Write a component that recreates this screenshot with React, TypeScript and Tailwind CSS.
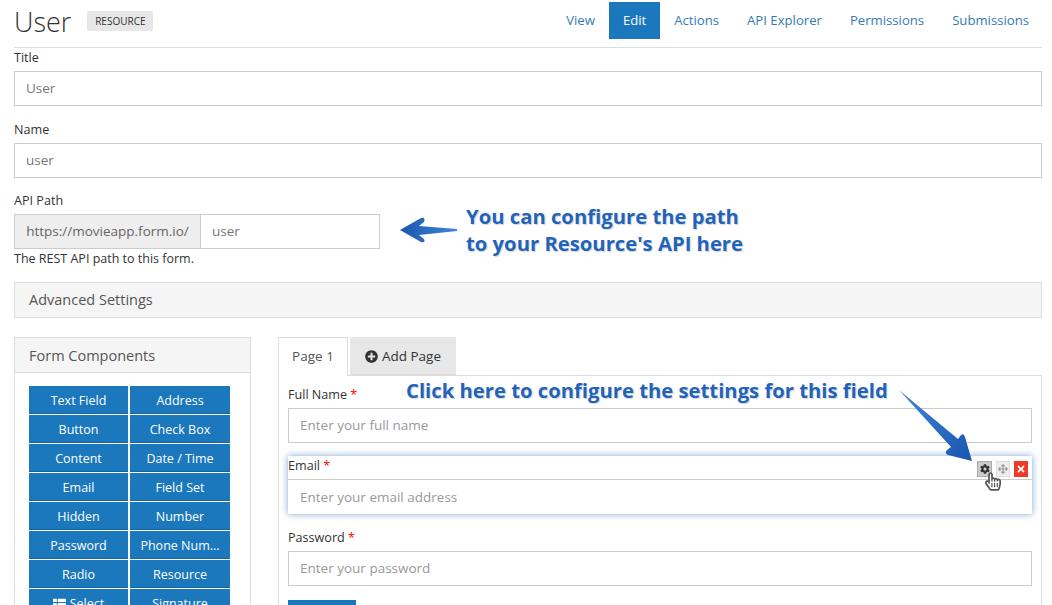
import { FaPlusCircle, FaThList, FaCog, FaArrowsAlt, FaTimes, FaRegHandPointer, FaHandPointer } from "react-icons/fa";

const tabs = ["View", "Edit", "Actions", "API Explorer", "Permissions", "Submissions"];

const components = [
  ["Text Field", "Address"],
  ["Button", "Check Box"],
  ["Content", "Date / Time"],
  ["Email", "Field Set"],
  ["Hidden", "Number"],
  ["Password", "Phone Num..."],
  ["Radio", "Resource"],
  ["Select", "Signature"],
];

const calloutText =
  "absolute font-bold text-[20.25px] leading-[27px] text-[#1f63bb] whitespace-nowrap [text-shadow:0_0_2px_#fff,1px_1px_1px_#c9c9c9,-1px_-1px_1px_#fff]";

function Label({ text, required }: { text: string; required?: boolean }) {
  return (
    <div className="text-[12.6px] leading-[20px] text-[#333]">
      {text}
      {required && <span className="text-[#f00]"> *</span>}
    </div>
  );
}

function Input({ value, placeholder }: { value?: string; placeholder?: string }) {
  return (
    <div className="h-[35px] border border-[#ccc] bg-white px-[11px] flex items-center text-[13.5px] text-[#777]">
      {value ?? <span className="text-[#999]">{placeholder}</span>}
    </div>
  );
}

function FormComponents() {
  return (
    <div className="w-[237px] shrink-0 border border-[#ddd] border-b-0">
      <div className="h-[35px] bg-[#f5f5f5] border-b border-[#ddd] pl-[14px] pt-[1px] flex items-center text-[14.5px] text-[#555]">
        Form Components
      </div>
      <div className="pt-[13px] pl-[14px] grid grid-cols-[99px_100px] gap-x-[2px] gap-y-px">
        {components.flat().map((name) => (
          <div
            key={name}
            className="h-[28px] pt-[3px] bg-[#1b78bc] border-b border-[#16659f] text-white text-[12.5px] flex items-center justify-center gap-1"
          >
            {name === "Select" && <FaThList className="w-[13px] h-[13px]" />}
            {name}
          </div>
        ))}
      </div>
    </div>
  );
}

function Builder() {
  return (
    <div className="flex-1 min-w-0">
      <div className="flex h-[38px] gap-[2px]">
        <div className="w-[70px] h-[39px] pb-[2px] relative z-10 bg-white border border-[#ddd] border-b-0 flex items-center justify-center text-[13.5px] text-[#555]">
          Page 1
        </div>
        <div className="w-[106px] pt-[1px] bg-[#e7e7e7] border-b border-[#ddd] flex items-center justify-center gap-1 text-[13.5px] text-[#333]">
          <FaPlusCircle className="w-[13px] h-[13px]" />
          Add Page
        </div>
      </div>
      <div className="border border-[#ddd] border-b-0 h-[230px] px-[9px] pt-[9px]">
        <Label text="Full Name" required />
        <div className="mt-[3px]">
          <Input placeholder="Enter your full name" />
        </div>
        <div className="relative mt-[13px] h-[58px] bg-white shadow-[0_0_7px_rgba(70,130,190,0.7)]">
          <div className="h-[24px] pb-[2px] flex items-center border-b border-[#ccc] text-[12.6px] text-[#333]">
            Email<span className="text-[#f00]">&nbsp;*</span>
          </div>
          <div className="h-[34px] px-[12px] flex items-center text-[13.5px] text-[#999]">
            Enter your email address
          </div>
          <div className="absolute top-[5px] right-[4px] flex gap-[4px]">
            <div className="w-[15px] h-[16px] bg-[#ccc] border border-[#aaa] flex items-center justify-center text-[#333]">
              <FaCog className="w-[10px] h-[10px]" />
            </div>
            <div className="w-[14px] h-[16px] bg-[#eee] border border-[#ddd] flex items-center justify-center text-[#999]">
              <FaArrowsAlt className="w-[10px] h-[10px]" />
            </div>
            <div className="w-[14px] h-[16px] bg-[#ee3a2b] flex items-center justify-center text-white">
              <FaTimes className="w-[10px] h-[10px]" />
            </div>
          </div>
        </div>
        <div className="mt-[14px]">
          <Label text="Password" required />
        </div>
        <div className="mt-[3px]">
          <Input placeholder="Enter your password" />
        </div>
        <div className="mt-[14px] w-[68px] h-[30px] bg-[#1b78bc]" />
      </div>
    </div>
  );
}

export default function App() {
  return (
    <div
      className="relative h-[605px] w-[1052px] overflow-hidden bg-white pl-[14px] pr-[10px]"
      style={{ fontFamily: '"Open Sans", sans-serif' }}
    >
      {/* Header */}
      <div className="h-[48px] border-b border-[#ddd] flex">
        <div className="flex items-center h-[42px]">
          <h1 className="text-[27px] font-light text-[#333] leading-none">User</h1>
          <span className="ml-[16px] h-[20px] w-[66px] justify-center rounded-[2px] bg-[#e7e7e7] flex items-center text-[10px] text-[#333]">
            RESOURCE
          </span>
        </div>
        <div className="ml-auto flex h-[37px] mt-[2px] mr-[-1px] text-[13.15px] text-[#337ab7]">
          {tabs.map((t) => (
            <div
              key={t}
              className={`px-[14px] flex items-center ${t === "Edit" ? "bg-[#1b78bc] text-white" : ""}`}
            >
              {t}
            </div>
          ))}
        </div>
      </div>

      {/* Settings */}
      <div>
        <Label text="Title" />
        <div className="mt-[3px]">
          <Input value="User" />
        </div>
      </div>
      <div className="mt-[14px]">
        <Label text="Name" />
        <div className="mt-[3px]">
          <Input value="user" />
        </div>
      </div>
      <div className="mt-[13px]">
        <Label text="API Path" />
        <div className="mt-[3px] w-[366px] flex h-[35px] text-[13.5px]">
          <div className="w-[187px] bg-[#eee] border border-[#ccc] flex items-center justify-center text-[#666]">
            https://movieapp.form.io/
          </div>
          <div className="flex-1 border border-l-0 border-[#ccc] px-[11px] flex items-center text-[#777]">user</div>
        </div>
        <p className="mt-[1px] text-[12.5px] leading-[18px] text-[#333]">The REST API path to this form.</p>
      </div>
      <div className="mt-[14px] h-[36px] bg-[#f5f5f5] border border-[#ddd] pl-[14px] flex items-center text-[14.5px] text-[#555]">
        Advanced Settings
      </div>

      <div className="mt-[19px] flex gap-[27px]">
        <FormComponents />
        <Builder />
      </div>

      {/* Callouts */}
      <div className={`${calloutText} left-[466px] top-[203px]`}>
        You can configure the path
        <br />
        to your Resource's API here
      </div>
      <div className={`${calloutText} left-[406px] top-[377px]`}>Click here to configure the settings for this field</div>

      <svg className="absolute left-[400px] top-[217px]" width="58" height="27" viewBox="0 0 58 27">
        <defs>
          <linearGradient id="arrowLeft" x1="0" y1="0" x2="1" y2="0">
            <stop offset="0" stopColor="#1a56ad" />
            <stop offset="1" stopColor="#3f86d8" />
          </linearGradient>
        </defs>
        <path d="M0 13 L21 1 Q26 0 24 5 L19 9 L57 12 L57 14 L19 18 L24 22 Q26 26 21 25 Z" fill="url(#arrowLeft)" />
      </svg>
      <svg className="absolute left-[899px] top-[388px]" width="76" height="76" viewBox="0 0 76 76">
        <defs>
          <linearGradient id="arrowDown" x1="0" y1="0" x2="1" y2="1">
            <stop offset="0" stopColor="#3f86d8" />
            <stop offset="1" stopColor="#1a56ad" />
          </linearGradient>
        </defs>
        <path d="M0 2 L59 51 L62 47 Q65 45 66 49 L73 73 L49 67 Q45 65 48 62 L52 59 Z" fill="url(#arrowDown)" />
      </svg>
      <div className="absolute left-[985px] top-[472px] w-[16px] h-[19px] text-[#555]">
        <FaHandPointer className="absolute inset-0 w-[16px] h-[19px] text-white" />
        <FaRegHandPointer className="absolute inset-0 w-[16px] h-[19px]" />
      </div>
    </div>
  );
}
